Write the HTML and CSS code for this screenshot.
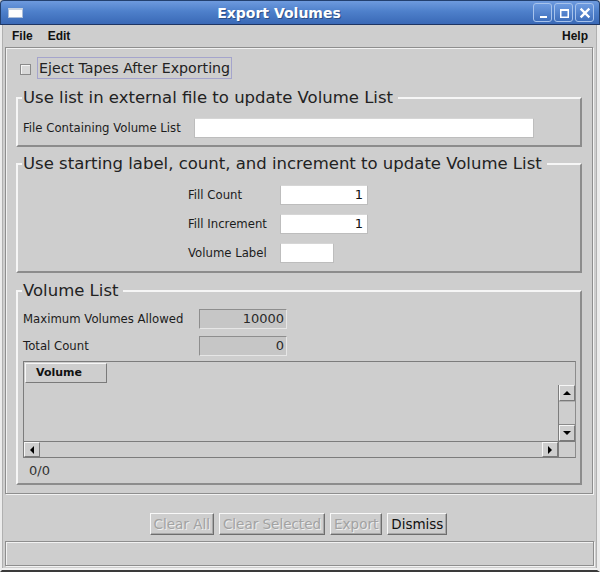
FILE: index.html
```html
<!DOCTYPE html>
<html>
<head>
<meta charset="utf-8">
<title>Export Volumes</title>
<link rel="stylesheet" href="styles.css">
</head>
<body>
<div class="titlebar">
  <span class="winmenu"></span>
  <span class="title">Export Volumes</span>
  <div class="wbtns">
    <span class="wbtn"><svg width="16" height="16" viewBox="0 0 16 16"><rect x="5" y="11" width="7" height="2" fill="#fff"/></svg></span>
    <span class="wbtn"><svg width="16" height="16" viewBox="0 0 16 16"><rect x="4.75" y="4.75" width="7.5" height="7.5" fill="none" stroke="#fff" stroke-width="1.5"/><rect x="4" y="4" width="9" height="2" fill="#fff"/></svg></span>
    <span class="wbtn"><svg width="16" height="16" viewBox="0 0 16 16"><path d="M4.5 4.5 L11.5 11.5 M11.5 4.5 L4.5 11.5" stroke="#fff" stroke-width="2.4" stroke-linecap="square"/></svg></span>
  </div>
</div>
<div class="frame">
  <div class="menubar">
    <span class="menu">File</span>
    <span class="menu">Edit</span>
    <span class="spacer"></span>
    <span class="menu">Help</span>
  </div>
  <div class="main">
    <div class="checkrow">
      <span class="checkbox"></span>
      <span class="checklabel">Eject Tapes After Exporting</span>
    </div>
    <fieldset class="group g1">
      <legend>Use list in external file to update Volume List</legend>
      <div class="row">
        <span class="label w171">File Containing Volume List</span>
        <span class="input wide"></span>
      </div>
    </fieldset>
    <fieldset class="group g2">
      <legend>Use starting label, count, and increment to update Volume List</legend>
      <div class="fillgrid">
        <span class="label">Fill Count</span><span class="input num">1</span>
        <span class="label">Fill Increment</span><span class="input num">1</span>
        <span class="label">Volume Label</span><span class="input short"></span>
      </div>
    </fieldset>
    <fieldset class="group g3">
      <legend>Volume List</legend>
      <div class="row">
        <span class="label w176">Maximum Volumes Allowed</span>
        <span class="field">10000</span>
      </div>
      <div class="row r2">
        <span class="label w176">Total Count</span>
        <span class="field">0</span>
      </div>
      <div class="table">
        <div class="thead"><span class="th">Volume</span></div>
        <div class="tcorner-top"></div>
        <div class="tbody"></div>
        <div class="vsb">
          <span class="sbtn"><span class="arr up"></span></span>
          <span class="track"></span>
          <span class="sbtn"><span class="arr down"></span></span>
        </div>
        <div class="hsb">
          <span class="sbtn"><span class="arr left"></span></span>
          <span class="htrack"></span>
          <span class="sbtn"><span class="arr right"></span></span>
        </div>
        <div class="corner"></div>
      </div>
      <div class="count">0/0</div>
    </fieldset>
  </div>
  <div class="buttons">
    <span class="btn disabled">Clear All</span>
    <span class="btn disabled">Clear Selected</span>
    <span class="btn disabled">Export</span>
    <span class="btn">Dismiss</span>
  </div>
  <div class="status"></div>
</div>
</body>
</html>
```
FILE: styles.css
```css
* { box-sizing: border-box; }
html, body { margin: 0; padding: 0; }
body {
  width: 600px;
  height: 572px;
  overflow: hidden;
  background: #cecece;
  font-family: "DejaVu Sans", sans-serif;
  color: #1c1c1c;
}

/* Title bar */
.titlebar {
  height: 25px;
  display: flex;
  align-items: center;
  padding: 0 5px 0 7px;
  background: linear-gradient(#6e9ade 0%, #4e80cb 45%, #3a69b6 100%);
  border: 1px solid #23406f;
  border-bottom: 1px solid #1e3563;
  border-radius: 4px 4px 0 0;
}
.winmenu {
  width: 15px;
  height: 10px;
  background: #fdfdfd;
  border: 1px solid #a9bcd9;
  border-top: 2px solid #c9d3e1;
  margin-top: 1px;
}
.title {
  flex: 1;
  text-align: center;
  font-family: "DejaVu Sans", sans-serif;
  font-weight: bold;
  font-size: 14px;
  color: #fff;
  text-shadow: 1px 1px 0 #2d4f86;
  padding-left: 2px;
}
.wbtns { display: flex; gap: 2px; }
.wbtn {
  width: 19px;
  height: 19px;
  display: flex;
  align-items: center;
  justify-content: center;
  border: 1px solid #a7c3ec;
  border-radius: 3px;
  background: linear-gradient(#6d9be0, #3f6fbc);
}

/* Frame */
.frame {
  height: 547px;
  display: flex;
  flex-direction: column;
  border-left: 2px solid #ececec;
  border-right: 3px solid #ececec;
  border-bottom: 2px solid #3a3a3a;
  box-shadow: inset 0 -2px 0 #f0f0f0, inset 1px 0 0 #b0b0b0, inset -1px 0 0 #b0b0b0;
  background: #cecece;
}
.menubar {
  height: 22px;
  display: flex;
  align-items: center;
  padding: 0 9px 0 10px;
  font-family: "Liberation Sans", Arial, sans-serif;
  font-weight: bold;
  font-size: 12px;
  color: #111;
}
.menu { margin-right: 15px; }
.menu:last-child { margin-right: 0; }
.spacer { flex: 1; }

/* Main panel */
.main {
  margin: 0 4px 0 3px;
  border: 1px solid #8e8e8e;
  box-shadow: inset 1px 1px 0 #f2f2f2, 1px 1px 0 #f2f2f2;
  padding: 9px 10px 8px 10px;
}
.checkrow {
  height: 22px;
  display: flex;
  align-items: center;
}
.checkbox {
  width: 11px;
  height: 11px;
  margin-left: 4px;
  margin-top: 2px;
  border: 1px solid #8a8a8a;
  background: #d8d8d8;
  box-shadow: inset 1px 1px 0 #f4f4f4;
}
.checklabel {
  margin-left: 6px;
  height: 22px;
  line-height: 20px;
  padding: 0 1px 0 1px;
  border: 1px solid #a4a4cc;
  font-size: 14.2px;
  color: #222;
}

/* Group boxes */
.group {
  margin: 0;
  border: 2px solid;
  border-color: #f6f6f6 #8c8c8c #8c8c8c #f6f6f6;
  padding: 0 5px 7px 5px;
  min-width: 0;
}
.group legend {
  padding: 0 5px 0 1px;
  margin-left: -1px;
  font-size: 16.5px;
  line-height: 18px;
  color: #222;
}
.g1 { margin-top: 10px; }
.g1 .row { margin-top: 11px; }
.g2 { margin-top: 8px; padding-bottom: 8px; }
.g3 { margin-top: 9px; padding-bottom: 4px; }

.row {
  display: flex;
  align-items: center;
  height: 20px;
}
.label {
  font-size: 11.7px;
  color: #1c1c1c;
}
.w171 { width: 171px; }
.w176 { width: 176px; }
.input {
  height: 20px;
  background: #fff;
  border: 1px solid #bdbdbd;
  border-top-color: #d6d6d6;
  font-size: 13px;
  line-height: 18px;
  text-align: right;
  padding: 0 4px;
  color: #111;
}
.wide { width: 340px; }
.num { width: 88px; }
.short { width: 54px; }

.fillgrid {
  margin-top: 12px;
  margin-left: 165px;
  display: grid;
  grid-template-columns: 92px auto;
  grid-auto-rows: 20px;
  row-gap: 9px;
  align-items: center;
  justify-items: start;
}

.g3 .row:first-of-type { margin-top: 9px; }
.g3 .r2 { margin-top: 7px; }
.field {
  width: 88px;
  height: 20px;
  background: #c6c6c6;
  border: 1px solid;
  border-color: #8e8e8e #e6e6e6 #e6e6e6 #8e8e8e;
  font-size: 13px;
  line-height: 18px;
  text-align: right;
  padding: 0 2px;
  color: #2a2a2a;
}

/* Table */
.table {
  margin-top: 5px;
  width: 553px;
  height: 97px;
  border: 1px solid #7c7c7c;
  border-right-color: #8c8c8c;
  display: grid;
  grid-template-columns: 1fr 17px;
  grid-template-rows: 23px 1fr 16px;
}
.thead { padding: 1px 0 0 1px; }
.th {
  display: block;
  width: 82px;
  height: 20px;
  border: 1px solid;
  border-color: #f6f6f6 #7a7a7a #7a7a7a #f6f6f6;
  font-size: 11px;
  font-weight: bold;
  line-height: 18px;
  padding-left: 10px;
  color: #111;
}
.vsb {
  display: flex;
  flex-direction: column;
  border-left: 1px solid #7c7c7c;
}
.sbtn {
  width: 16px;
  height: 16px;
  flex: none;
  display: flex;
  align-items: center;
  justify-content: center;
  border: 1px solid;
  border-color: #f6f6f6 #7a7a7a #7a7a7a #f6f6f6;
  background: #cecece;
}
.track {
  flex: 1;
  border-bottom: 1px solid #8a8a8a;
  border-top: 1px solid #b0b0b0;
}
.hsb {
  display: flex;
  border-top: 1px solid #7c7c7c;
}
.hsb .sbtn { height: 15px; }
.htrack { flex: 1; }
.corner {
  border-top: 1px solid #7c7c7c;
  border-left: 1px solid #7c7c7c;
}
.arr { width: 0; height: 0; display: block; }
.arr.up { border-left: 4px solid transparent; border-right: 4px solid transparent; border-bottom: 4px solid #000; }
.arr.down { border-left: 4px solid transparent; border-right: 4px solid transparent; border-top: 4px solid #000; }
.arr.left { border-top: 4px solid transparent; border-bottom: 4px solid transparent; border-right: 4px solid #000; }
.arr.right { border-top: 4px solid transparent; border-bottom: 4px solid transparent; border-left: 4px solid #000; }

.count {
  margin-top: 5px;
  height: 16px;
  line-height: 16px;
  font-size: 13px;
  padding-left: 6px;
  color: #333;
}

/* Bottom buttons */
.buttons {
  margin-top: 19px;
  display: flex;
  justify-content: center;
  gap: 5px;
  padding-right: 2px;
}
.btn {
  height: 22px;
  line-height: 20px;
  font-size: 13.5px;
  padding: 0 3px;
  border: 1px solid;
  border-color: #f8f8f8 #6e6e6e #6e6e6e #f8f8f8;
  box-shadow: inset -1px -1px 0 #a8a8a8;
  color: #111;
}
.btn.disabled {
  color: #a2a2a2;
  text-shadow: 1px 1px 0 #efefef;
}

.status {
  margin: 6px 3px 0 3px;
  height: 25px;
  border: 1px solid #8e8e8e;
  box-shadow: inset 1px 1px 0 #f2f2f2, 1px 1px 0 #f2f2f2;
}
```
